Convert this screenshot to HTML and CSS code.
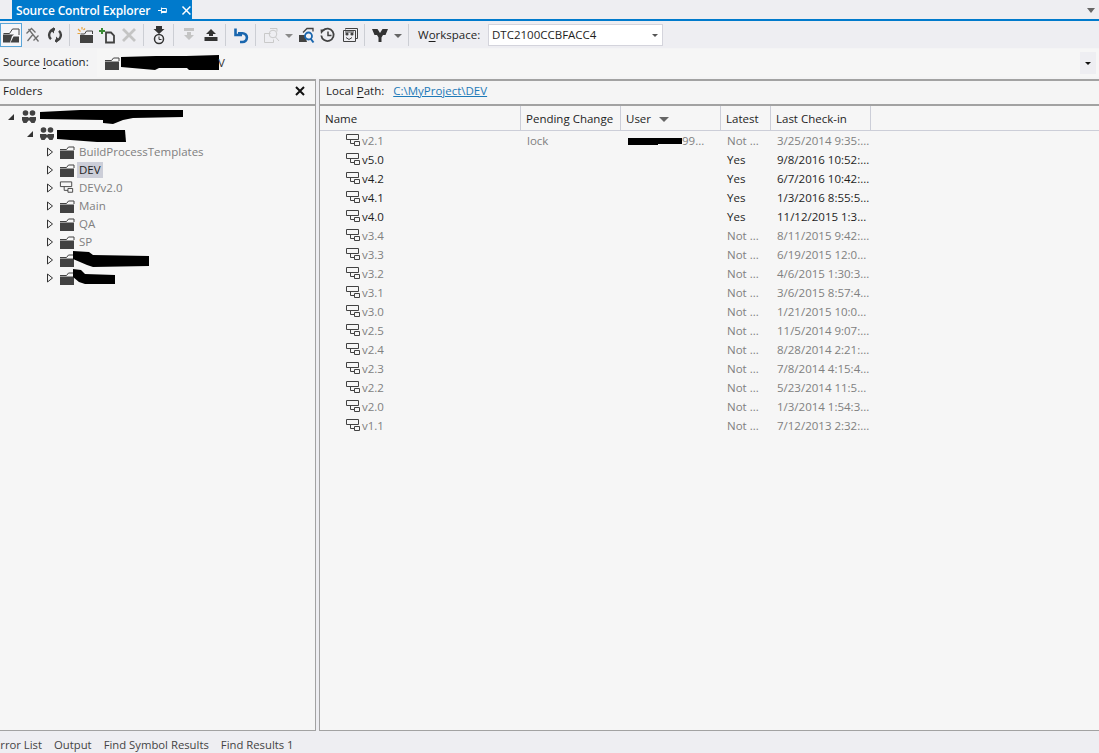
FILE: index.html
```html
<!DOCTYPE html>
<html lang="en">
<head>
<meta charset="utf-8">
<title>Source Control Explorer</title>
<link rel="stylesheet" href="styles.css">
</head>
<body>
<svg class="defs" width="0" height="0" aria-hidden="true">
  <symbol id="folder" viewBox="0 0 16 16"><path d="M1 6.500h14V15H1z" fill="#424242"/><path d="M1 5.500h6.500l2-2.500h5.500v3" fill="none" stroke="#424242"/></symbol>
  <symbol id="open" viewBox="0 0 18 18"><path d="M1 8.500h11l-2 1.500-2 6.500H1zM8.500 16.500l3-6H17v6z" fill="#424242"/><path d="M1.500 7.500h6l3-4.500h6.500v6" fill="none" stroke="#424242"/></symbol>
  <symbol id="team" viewBox="0 0 16 16"><g fill="#424242"><circle cx="4.500" cy="4" r="2.800"/><circle cx="11.500" cy="4" r="2.800"/><path d="M1 8h6.500v1h1V8H15v3l-1.500 3h-3l-2-2.500h-1L5.500 14h-3L1 11z"/></g></symbol>
  <symbol id="branch" viewBox="0 0 17 16"><g fill="none" stroke="#424242"><path d="M1.500 1.500h12v5h-12zM5.500 6.500v4h4M9.500 8.500h5v4h-5z"/></g></symbol>
  <symbol id="exp" viewBox="0 0 8 10"><path d="M1.500 1v8l5-4z" fill="#f5f5f5" stroke="#333"/></symbol>
  <symbol id="col" viewBox="0 0 8 8"><path d="M7 1v6H1z" fill="#333"/></symbol>
</svg>

<header class="tabstrip">
  <div class="doctab">
    <span class="doctab-title">Source Control Explorer</span>
    <svg class="pin" width="11" height="11" viewBox="0 0 11 11"><path d="M0 5.500h3M3.500 2.500v6M3.500 3.500h5v4h-5M8 6.500h-4" fill="none" stroke="#fff"/></svg>
    <svg class="close" width="11" height="11" viewBox="0 0 11 11"><path d="M1.500 1.500l8 8M9.500 1.500l-8 8" stroke="#fff" stroke-width="1.500"/></svg>
  </div>
  <span class="overflow"></span>
</header>

<nav class="toolbar">
  <span class="tb active"><svg width="18" height="18"><use href="#open"/></svg></span>
  <span class="tb"><svg width="16" height="16" viewBox="0 0 16 16"><path d="M1.500 6.500l5-5 4 4M3.500 2l10 12.500M2.500 14l5-6M13.500 8.500l-5 5" fill="none" stroke="#6e6e6e" stroke-width="1.300"/></svg></span>
  <span class="tb"><svg width="16" height="16" viewBox="0 0 16 16"><path d="M8 2.200a5.800 5.800 0 0 0-4 10M8 13.800a5.800 5.800 0 0 0 4-10" fill="none" stroke="#424242" stroke-width="2.400"/><path d="M7 0v6.500L3.500 3.200zM9 9.500V16l3.500-3.300z" fill="#424242"/></svg></span>
  <i class="sep"></i>
  <span class="tb"><svg width="17" height="17" viewBox="0 0 17 17"><path d="M3 8h13v8H3z" fill="#424242"/><path d="M3.500 7h4l2-3h6v3" fill="none" stroke="#424242"/><path d="M1 2l2.500 2.500M5 0v2.500M.5 6.500h2.500M8 1.500l-1.500 1.500" stroke="#e8a33d" stroke-width="1.200"/></svg></span>
  <span class="tb"><svg width="17" height="17" viewBox="0 0 17 17"><path d="M7 5.500h5l3 3v7H7z" fill="none" stroke="#424242" stroke-width="1.800"/><path d="M3 1v6M0 4h6" stroke="#388a34" stroke-width="2"/></svg></span>
  <span class="tb"><svg width="16" height="16" viewBox="0 0 16 16"><path d="M2 2l12 12M14 2L2 14" stroke="#c4c4c4" stroke-width="2.800"/></svg></span>
  <i class="sep"></i>
  <span class="tb"><svg width="12" height="19" viewBox="0 0 12 19"><path d="M3 0h6v3h2.500L6 8 .5 3H3z" fill="#333"/><circle cx="6" cy="13" r="4.500" fill="none" stroke="#333" stroke-width="1.500"/><path d="M6 10.500V13.500h2.500" fill="none" stroke="#333"/></svg></span>
  <i class="sep"></i>
  <span class="tb"><svg width="16" height="16" viewBox="0 0 16 16"><path d="M3 1h10v3H3zM6 5h4v3h3l-5 5-5-5h3z" fill="#c4c4c4"/></svg></span>
  <span class="tb"><svg width="16" height="16" viewBox="0 0 16 16"><path d="M8 2l5 5h-3v2H6V7H3zM1.500 10h13v4h-13z" fill="#333"/></svg></span>
  <i class="sep"></i>
  <span class="tb"><svg width="16" height="17" viewBox="0 0 16 17"><path d="M5 6.200h4.500a4.300 4.300 0 0 1 0 8.800H7M2.500 1.500v6.500H9" fill="none" stroke="#1a66ae" stroke-width="2.600"/></svg></span>
  <i class="sep"></i>
  <span class="tb"><svg width="17" height="17" viewBox="0 0 17 17"><g fill="none" stroke="#c9c9c9"><path d="M1.500 6.500h6M1.500 6.500v9h9v-3"/><path d="M7 1.500h7v3"/><circle cx="10" cy="7" r="3.800"/><path d="M12.500 10l3.500 4"/></g></svg></span>
  <span class="tb-arrow"></span>
  <span class="tb"><svg width="17" height="17" viewBox="0 0 17 17"><path d="M1 8h6l2 7H1z" fill="#424242"/><path d="M5 5.500l4-4h6v3" fill="none" stroke="#424242" stroke-width="1.300"/><circle cx="10.500" cy="9" r="3.500" fill="#f0f0f4" stroke="#1a66ae" stroke-width="1.800"/><path d="M12.500 11.500l3 4" stroke="#1a66ae" stroke-width="2"/></svg></span>
  <span class="tb"><svg width="16" height="16" viewBox="0 0 16 16"><path d="M3 3.500a6.200 6.200 0 1 1-1.700 5" fill="none" stroke="#424242" stroke-width="1.800"/><path d="M.5 2.500l4.500.1L1 7z" fill="#424242"/><path d="M8 4.500v4h3.500" fill="none" stroke="#424242" stroke-width="1.500"/></svg></span>
  <span class="tb"><svg width="16" height="16" viewBox="0 0 16 16"><path d="M3.500 2.500v-1h12v10h-1.500" fill="none" stroke="#424242"/><path d="M1.500 3.500h12v11h-12z" fill="none" stroke="#424242"/><circle cx="5" cy="7" r="1.600" fill="#424242"/><circle cx="10" cy="7" r="1.600" fill="#424242"/><path d="M4 10.500l3 2 3-2M3 5h9" stroke="#424242" fill="none"/></svg></span>
  <i class="sep"></i>
  <span class="tb"><svg width="16" height="16" viewBox="0 0 16 16"><path d="M0 2h5.500L8 6l2.500-4H16l-2.500 6H11L9.500 10.500V15h-3v-4.500L5 8H2.500z" fill="#333"/></svg></span>
  <span class="tb-arrow short"></span>
  <i class="sep"></i>
  <label class="ws-label">W<u>o</u>rkspace:</label>
  <div class="combo"><span class="combo-text">DTC2100CCBFACC4</span><span class="tb-arrow tiny"></span></div>
</nav>

<section class="locbar">
  <label class="loc-label">Source <u>l</u>ocation:</label>
  <div class="loc-input">
    <svg class="loc-folder" width="16" height="16"><use href="#folder"/></svg>
    <svg class="blob" width="98" height="16" viewBox="0 0 98 16"><path d="M0 2L35 1l30 0 33-1 0 15-30 0-2-2-28 0-4 2L0 12z" fill="#000"/></svg>
    <span class="loc-v">V</span>
    <span class="loc-btn"><i></i></span>
  </div>
</section>

<main class="panes">
  <aside class="pane left">
    <div class="pane-head"><span>Folders</span>
      <svg class="pane-close" width="10" height="10" viewBox="0 0 10 10"><path d="M1 1l8 8M9 1l-8 8" stroke="#111" stroke-width="2"/></svg>
    </div>
    <ul class="tree">
      <li class="node d0"><svg class="tw" width="8" height="8"><use href="#col"/></svg><svg class="ic" width="16" height="16"><use href="#team"/></svg><svg class="blob" width="143" height="15" viewBox="0 0 143 15"><path d="M0 3L40 1l103 0 0 7-50 1-10 2-10 4-10-1 0-3L0 10z" fill="#000"/></svg></li>
      <li class="node d1"><svg class="tw" width="8" height="8"><use href="#col"/></svg><svg class="ic" width="16" height="16"><use href="#team"/></svg><svg class="blob" width="69" height="15" viewBox="0 0 69 15"><path d="M0 3l68 0 1 12H40L0 12z" fill="#000"/></svg></li>
      <li class="node d2"><svg class="tw tw-o" width="8" height="10"><use href="#exp"/></svg><svg class="ic" width="16" height="16"><use href="#folder"/></svg><span class="lbl">BuildProcessTemplates</span></li>
      <li class="node d2"><svg class="tw tw-o" width="8" height="10"><use href="#exp"/></svg><svg class="ic" width="16" height="16"><use href="#folder"/></svg><span class="lbl sel">DEV</span></li>
      <li class="node d2"><svg class="tw tw-o" width="8" height="10"><use href="#exp"/></svg><svg class="ic" width="16" height="16"><use href="#branch"/></svg><span class="lbl">DEVv2.0</span></li>
      <li class="node d2"><svg class="tw tw-o" width="8" height="10"><use href="#exp"/></svg><svg class="ic" width="16" height="16"><use href="#folder"/></svg><span class="lbl">Main</span></li>
      <li class="node d2"><svg class="tw tw-o" width="8" height="10"><use href="#exp"/></svg><svg class="ic" width="16" height="16"><use href="#folder"/></svg><span class="lbl">QA</span></li>
      <li class="node d2"><svg class="tw tw-o" width="8" height="10"><use href="#exp"/></svg><svg class="ic" width="16" height="16"><use href="#folder"/></svg><span class="lbl">SP</span></li>
      <li class="node d2"><svg class="tw tw-o" width="8" height="10"><use href="#exp"/></svg><svg class="ic" width="16" height="16"><use href="#folder"/></svg><svg class="blob over" width="76" height="16" viewBox="0 0 76 16"><path d="M0 0l16 1 4 3 56 1 0 10-56 1-6-2L0 8z" fill="#000"/></svg></li>
      <li class="node d2"><svg class="tw tw-o" width="8" height="10"><use href="#exp"/></svg><svg class="ic" width="16" height="16"><use href="#folder"/></svg><svg class="blob over" width="42" height="15" viewBox="0 0 42 15"><path d="M0 0l8 1 4 4 30 1 0 9-30 0-6-2L0 8z" fill="#000"/></svg></li>
    </ul>
  </aside>

  <section class="pane right">
    <div class="pane-head path-head"><label>Local <u>P</u>ath:</label><a class="path-link" href="#">C:\MyProject\DEV</a></div>
    <div class="grid-head">
      <span class="c name">Name</span><span class="c pend">Pending Change</span><span class="c user">User<i class="sort"></i></span><span class="c latest">Latest</span><span class="c last">Last Check-in</span>
    </div>
    <div class="row old"><span class="c name"><svg class="br" width="17" height="16"><use href="#branch"/></svg>v2.1</span><span class="c pend">lock</span><span class="c user"><svg class="blob" width="54" height="8" viewBox="0 0 54 8"><path d="M0 1l54 0 0 6-24 0 0 1-30 0z" fill="#000"/></svg>99...</span><span class="c latest">Not ...</span><span class="c last">3/25/2014 9:35:...</span></div>
    <div class="row"><span class="c name"><svg class="br" width="17" height="16"><use href="#branch"/></svg>v5.0</span><span class="c pend"></span><span class="c user"></span><span class="c latest">Yes</span><span class="c last">9/8/2016 10:52:...</span></div>
    <div class="row"><span class="c name"><svg class="br" width="17" height="16"><use href="#branch"/></svg>v4.2</span><span class="c pend"></span><span class="c user"></span><span class="c latest">Yes</span><span class="c last">6/7/2016 10:42:...</span></div>
    <div class="row"><span class="c name"><svg class="br" width="17" height="16"><use href="#branch"/></svg>v4.1</span><span class="c pend"></span><span class="c user"></span><span class="c latest">Yes</span><span class="c last">1/3/2016 8:55:5...</span></div>
    <div class="row"><span class="c name"><svg class="br" width="17" height="16"><use href="#branch"/></svg>v4.0</span><span class="c pend"></span><span class="c user"></span><span class="c latest">Yes</span><span class="c last">11/12/2015 1:3...</span></div>
    <div class="row old"><span class="c name"><svg class="br" width="17" height="16"><use href="#branch"/></svg>v3.4</span><span class="c pend"></span><span class="c user"></span><span class="c latest">Not ...</span><span class="c last">8/11/2015 9:42:...</span></div>
    <div class="row old"><span class="c name"><svg class="br" width="17" height="16"><use href="#branch"/></svg>v3.3</span><span class="c pend"></span><span class="c user"></span><span class="c latest">Not ...</span><span class="c last">6/19/2015 12:0...</span></div>
    <div class="row old"><span class="c name"><svg class="br" width="17" height="16"><use href="#branch"/></svg>v3.2</span><span class="c pend"></span><span class="c user"></span><span class="c latest">Not ...</span><span class="c last">4/6/2015 1:30:3...</span></div>
    <div class="row old"><span class="c name"><svg class="br" width="17" height="16"><use href="#branch"/></svg>v3.1</span><span class="c pend"></span><span class="c user"></span><span class="c latest">Not ...</span><span class="c last">3/6/2015 8:57:4...</span></div>
    <div class="row old"><span class="c name"><svg class="br" width="17" height="16"><use href="#branch"/></svg>v3.0</span><span class="c pend"></span><span class="c user"></span><span class="c latest">Not ...</span><span class="c last">1/21/2015 10:0...</span></div>
    <div class="row old"><span class="c name"><svg class="br" width="17" height="16"><use href="#branch"/></svg>v2.5</span><span class="c pend"></span><span class="c user"></span><span class="c latest">Not ...</span><span class="c last">11/5/2014 9:07:...</span></div>
    <div class="row old"><span class="c name"><svg class="br" width="17" height="16"><use href="#branch"/></svg>v2.4</span><span class="c pend"></span><span class="c user"></span><span class="c latest">Not ...</span><span class="c last">8/28/2014 2:21:...</span></div>
    <div class="row old"><span class="c name"><svg class="br" width="17" height="16"><use href="#branch"/></svg>v2.3</span><span class="c pend"></span><span class="c user"></span><span class="c latest">Not ...</span><span class="c last">7/8/2014 4:15:4...</span></div>
    <div class="row old"><span class="c name"><svg class="br" width="17" height="16"><use href="#branch"/></svg>v2.2</span><span class="c pend"></span><span class="c user"></span><span class="c latest">Not ...</span><span class="c last">5/23/2014 11:5...</span></div>
    <div class="row old"><span class="c name"><svg class="br" width="17" height="16"><use href="#branch"/></svg>v2.0</span><span class="c pend"></span><span class="c user"></span><span class="c latest">Not ...</span><span class="c last">1/3/2014 1:54:3...</span></div>
    <div class="row old"><span class="c name"><svg class="br" width="17" height="16"><use href="#branch"/></svg>v1.1</span><span class="c pend"></span><span class="c user"></span><span class="c latest">Not ...</span><span class="c last">7/12/2013 2:32:...</span></div>
  </section>
</main>

<footer class="bottom-tabs">
  <span>Error List</span><span>Output</span><span>Find Symbol Results</span><span>Find Results 1</span>
</footer>
</body>
</html>
```
FILE: styles.css
```css
* { box-sizing: border-box; }
html, body { height: 100%; }
body {
  margin: 0;
  overflow: hidden;
  display: flex;
  flex-direction: column;
  background: #eeeef2;
  color: #1e1e1e;
  font: 11.5px/16px "Open Sans", "Noto Sans", sans-serif;
}
.defs { position: absolute; }
u { text-decoration-thickness: 1px; text-underline-offset: 2px; }

.tabstrip {
  flex: none;
  height: 21px;
  display: flex;
  justify-content: space-between;
  padding-left: 12px;
  border-bottom: 2px solid #007acc;
}
.doctab {
  width: 180px;
  height: 19px;
  display: flex;
  align-items: center;
  padding: 2px 0 0 4px;
  background: #007acc;
  color: #fff;
}
.doctab-title { width: 144px; font-weight: 600; font-size: 12px; white-space: nowrap; letter-spacing: -.15px; }
.pin { margin-right: 12px; }
.overflow {
  margin: 8px 4px 0 0;
  width: 0; height: 0;
  border: 4px solid transparent;
  border-top: 5px solid #666;
}

.toolbar {
  flex: none;
  height: 27px;
  padding-top: 1px;
  display: flex;
  align-items: center;
}
.tb { flex: none; width: 22px; height: 24px; display: flex; align-items: center; justify-content: center; }
.tb.active { border: 1px solid #5aa5d8; background: #f5f5f8; }
.sep { flex: none; width: 1px; height: 22px; margin: 0 4px 0 3px; background: #ccced4; }
.tb-arrow {
  flex: none;
  width: 0; height: 0;
  margin: 2px 2px 0 3px;
  border: 4px solid transparent;
  border-top: 4px solid #8a8a8a;
  border-bottom: 0;
}
.tb-arrow.short { margin-right: 3px; border-top-color: #666; }
.tb-arrow.tiny { border-width: 3px 3px 0; border-top-color: #555; margin: 0 4px 0 0; }
.ws-label { margin-left: 5px; white-space: nowrap; width: 70px; }
.combo {
  flex: none;
  width: 175px;
  height: 22px;
  display: flex;
  align-items: center;
  justify-content: space-between;
  padding-left: 3px;
  background: #fff;
  border: 1px solid #d4d4dc;
}

.locbar {
  flex: none;
  height: 31px;
  display: flex;
  align-items: center;
  padding: 0 0 1px 3px;
  background: #f4f4f5;
}
.loc-label { width: 94px; white-space: nowrap; margin-top: -2px; }
.loc-input { flex: 1; height: 28px; display: flex; align-items: center; background: #f6f6f6; padding-left: 7px; }
.loc-folder { flex: none; margin-right: 1px; }
.loc-v { flex: 1; margin-left: -1px; color: #333; }
.loc-btn { flex: none; width: 16px; height: 22px; margin-right: 3px; background: #eeeef2; display: flex; align-items: center; justify-content: center; }
.loc-btn i { width: 0; height: 0; border: 3px solid transparent; border-top: 3px solid #111; border-bottom: 0; }

.panes { flex: 1; min-height: 0; display: flex; gap: 3px; }
.pane { background: #f6f6f6; border: 1px solid #a2a2a2; border-top-width: 2px; display: flex; flex-direction: column; }
.left { width: 316px; border-left: 0; }
.right { flex: 1; border-right: 0; }
.pane-head {
  flex: none;
  height: 25px;
  display: flex;
  align-items: center;
  justify-content: space-between;
  padding: 0 10px 4px 3px;
  border-bottom: 2px solid #a2a2a2;
  background: #f5f5f5;
}

.tree { list-style: none; margin: 0; padding: 2px 0 0; color: #808080; }
.node { height: 18px; display: flex; align-items: center; white-space: nowrap; }
.d0 { height: 17px; padding-left: 7px; }
.d1 { padding-left: 26px; }
.d2 { padding-left: 46px; }
.tw { flex: none; margin-right: 5px; }
.d0 .tw { margin-right: 6px; }
.d0 .ic { margin-right: 3px; }
.d1 .ic { margin-right: 2px; }
.ic { flex: none; margin-right: 4px; }
.lbl { padding: 0 2px; margin-left: -2px; }
.sel { background: #ccced8; color: #1e1e1e; }
.blob { flex: none; display: block; }
.blob.over { margin-left: -6px; margin-top: -3px; }

.path-head { justify-content: flex-start; padding-left: 6px; gap: 9px; }
.path-link { color: #1e7ab8; }

.grid-head, .row { display: grid; grid-template-columns: 201px 100px 100px 50px 100px; }
.grid-head {
  flex: none;
  height: 25px;
  align-items: stretch;
  border-bottom: 1px solid #ccced8;
}
.grid-head .c { display: flex; align-items: center; padding: 2px 0 0 5px; border-right: 1px solid #ccced8; }
.sort { width: 0; height: 0; margin-left: 8px; border: 5px solid transparent; border-top: 5px solid #666; border-bottom: 0; }
.row { height: 19px; align-items: center; color: #1e1e1e; white-space: nowrap; }
.row.old { color: #808080; }
.row .c { display: flex; align-items: center; padding-left: 6px; overflow: hidden; }
.row .name { padding-left: 25px; }
.br { flex: none; }
.row .user .blob { margin-left: 1px; }

.bottom-tabs {
  flex: none;
  height: 22px;
  padding-top: 6px;
  display: flex;
  align-items: center;
  gap: 12px;
  margin-left: -6px;
  font-size: 11.3px;
  color: #444;
}
```
